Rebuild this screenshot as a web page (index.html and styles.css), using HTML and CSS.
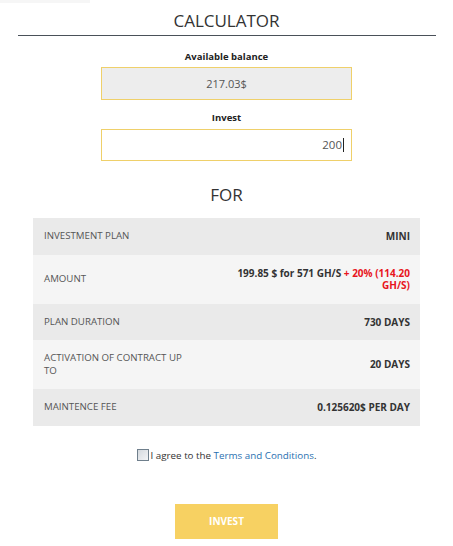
FILE: index.html
```html
<!DOCTYPE html>
<html lang="en">
<head>
    <meta charset="UTF-8">
    <meta name="viewport" content="width=device-width, initial-scale=1.0">
    <title>Calculator</title>
    <link rel="stylesheet" href="styles.css">
</head>
<body>
    <div class="topbar"></div>
    <div class="calculator">
        <h1>CALCULATOR</h1>

        <div class="field">
            <label>Available balance</label>
            <div class="balance">217.03$</div>
        </div>

        <div class="field">
            <label for="invest-amount">Invest</label>
            <div class="invest-input"><span id="invest-amount">200</span><span class="caret"></span></div>
        </div>

        <h2>FOR</h2>

        <table class="summary">
            <colgroup><col class="col-label"><col></colgroup>
            <tbody>
                <tr><td>Investment plan</td><td>MINI</td></tr>
                <tr><td>Amount</td><td>199.85 $ for 571 GH/S <span class="bonus">+ 20% (114.20 GH/S)</span></td></tr>
                <tr><td>Plan duration</td><td>730 DAYS</td></tr>
                <tr><td>Activation of contract up to</td><td>20 DAYS</td></tr>
                <tr><td>Maintence fee</td><td>0.125620$ PER DAY</td></tr>
            </tbody>
        </table>

        <div class="agree">
            <span class="checkbox"></span>I agree to the <a href="#">Terms and Conditions</a>.
        </div>

        <button class="btn-invest" type="button">INVEST</button>
    </div>
</body>
</html>
```

FILE: styles.css
```css
:root {
    --text-color: #333;
    --text-muted: #555;
    --line-color: #4a5159;
    --input-border: #efd06a;
    --row-odd: #eaeaea;
    --row-even: #f5f5f5;
    --red: #e8141c;
    --link: #2a6fb0;
    --yellow: #f7d162;
}
body {
    font-family: "Open Sans", "DejaVu Sans", sans-serif;
    color: var(--text-color);
    background: #fff;
    margin: 0;
}
.topbar { width: 90px; height: 3px; background: #f6f6f6; }
.calculator { width: 418px; margin: 0 auto; text-align: center; }
h1 {
    margin: 0;
    padding: 6px 0 2px;
    font-size: 17px;
    font-weight: 400;
    line-height: 24px;
    border-bottom: 1px solid var(--line-color);
}
.field label {
    display: block;
    margin-top: 14px;
    margin-bottom: 3px;
    font-size: 9.5px;
    font-weight: 700;
    line-height: 14px;
    color: #222;
}
.field + .field label { margin-top: 11px; margin-bottom: 4px; }
.balance, .invest-input {
    box-sizing: border-box;
    width: 251px;
    margin: 0 auto;
    border: 1px solid var(--input-border);
    font-size: 11px;
    color: var(--text-muted);
}
.balance { height: 33px; line-height: 31px; background: #ededed; }
.invest-input {
    height: 32px;
    line-height: 30px;
    text-align: right;
    padding-right: 7px;
    font-size: 11.5px;
}
.caret { display: inline-block; width: 1px; height: 14px; background: #222; vertical-align: -3px; margin-left: 1px; }
h2 {
    margin: 21px 0 10px;
    font-size: 17px;
    font-weight: 400;
    line-height: 26px;
}
.summary {
    width: 387px;
    margin: 0 auto;
    border-collapse: collapse;
    table-layout: fixed;
    font-size: 9.7px;
    line-height: 12.5px;
}
.summary .col-label { width: 166px; }
.summary tr:nth-child(odd) { background: var(--row-odd); }
.summary tr:nth-child(even) { background: var(--row-even); }
.summary td { padding: 12px 10px 12px 11px; vertical-align: middle; }
.summary td:first-child { text-align: left; text-transform: uppercase; color: var(--text-muted); }
.summary td:last-child { padding-left: 20px; text-align: right; font-size: 10px; font-weight: 700; color: var(--text-color); }
.bonus { color: var(--red); }
.agree {
    margin-top: 23px;
    font-size: 9.8px;
    line-height: 14px;
    color: var(--text-color);
}
.agree a { color: var(--link); text-decoration: none; }
.checkbox {
    display: inline-block;
    box-sizing: border-box;
    width: 12px;
    height: 12px;
    margin-right: 2px;
    vertical-align: -2px;
    border: 1px solid #6f7f8c;
    background: linear-gradient(135deg, #d4d9de, #f3f4f6);
}
.btn-invest {
    display: block;
    width: 103px;
    height: 35px;
    margin: 41px auto 0;
    border: 0;
    background: var(--yellow);
    color: #fff;
    font-family: inherit;
    font-size: 10px;
    font-weight: 700;
}
```
